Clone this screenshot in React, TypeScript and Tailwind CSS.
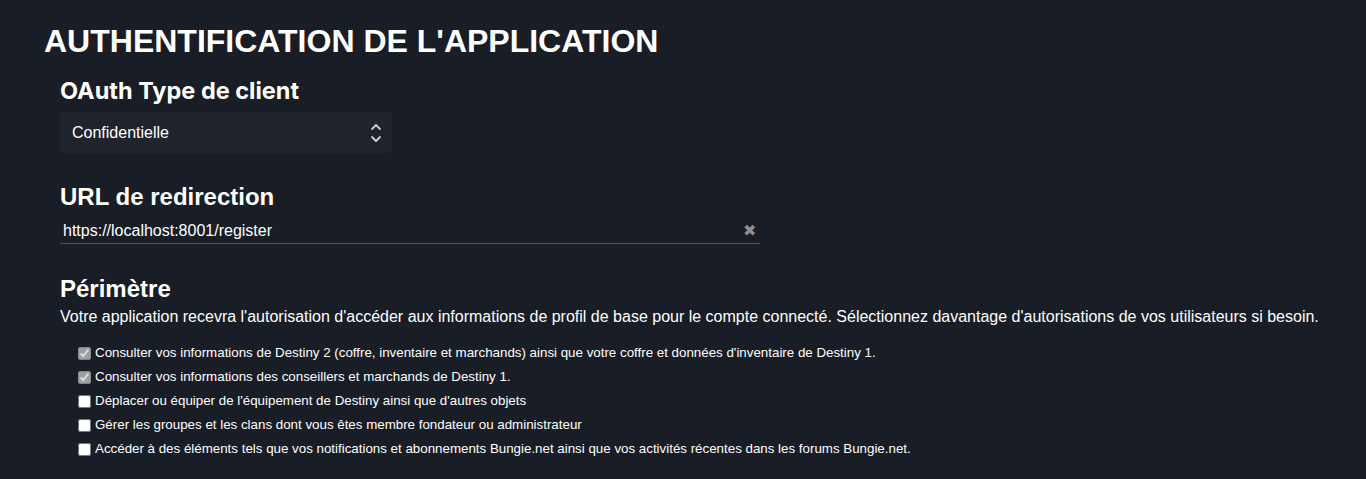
const scopes = [
  { label: "Consulter vos informations de Destiny 2 (coffre, inventaire et marchands) ainsi que votre coffre et données d'inventaire de Destiny 1.", checked: true, disabled: true },
  { label: 'Consulter vos informations des conseillers et marchands de Destiny 1.', checked: true, disabled: true },
  { label: "Déplacer ou équiper de l'équipement de Destiny ainsi que d'autres objets", checked: false, disabled: false },
  { label: 'Gérer les groupes et les clans dont vous êtes membre fondateur ou administrateur', checked: false, disabled: false },
  { label: 'Accéder à des éléments tels que vos notifications et abonnements Bungie.net ainsi que vos activités récentes dans les forums Bungie.net.', checked: false, disabled: false },
]

function UpDown() {
  return (
    <svg width="12" height="20" viewBox="0 0 12 20" fill="none" stroke="#c9cbcf" strokeWidth="1.8" strokeLinecap="round" strokeLinejoin="round">
      <path d="M2 6 L6 2 L10 6" />
      <path d="M2 14 L6 18 L10 14" />
    </svg>
  )
}

export default function App() {
  return (
    <div className="min-h-[479px] bg-[#191d25] text-white font-['Liberation_Sans',Arial,sans-serif] px-[44px] pt-[22px]">
      <h1 className="text-[32px] font-bold leading-[38px]">AUTHENTIFICATION DE L'APPLICATION</h1>

      <div className="pl-4 mt-[17px]">
        {/* client type */}
        <h2 className="text-[23.5px] font-bold leading-[28px] font-['Inter',sans-serif]">OAuth Type de client</h2>
        <div className="mt-[7px] w-[332px] h-[41px] bg-[#1f232c] rounded-[3px] flex items-center justify-between pl-3 pr-[10px] text-[16px]">
          <span>Confidentielle</span>
          <UpDown />
        </div>

        {/* redirect */}
        <h2 className="mt-[30px] text-[24px] font-bold leading-[28px]">URL de redirection</h2>
        <div className="mt-[7px] w-[700px] h-[26px] border-b border-[#4f5258] flex items-center justify-between pl-[3px] pr-[4px] text-[16px]">
          <span>https://localhost:8001/register</span>
          <span className="text-[#8e9094] text-[16px] leading-none">✖</span>
        </div>

        {/* scope */}
        <h2 className="mt-[31px] text-[24px] font-bold leading-[28px]">Périmètre</h2>
        <p className="mt-[3px] text-[16px] leading-[22px]">Votre application recevra l'autorisation d'accéder aux informations de profil de base pour le compte connecté. Sélectionnez davantage d'autorisations de vos utilisateurs si besoin.</p>

        <div className="mt-[16px] pl-[18px] flex flex-col gap-[6px]">
          {scopes.map((s) => (
            <label key={s.label} className="flex items-center gap-[4px] text-[13.33px] leading-[18px]">
              <input type="checkbox" defaultChecked={s.checked} disabled={s.disabled} className="w-[13px] h-[13px] m-0" />
              <span>{s.label}</span>
            </label>
          ))}
        </div>
      </div>
    </div>
  )
}
